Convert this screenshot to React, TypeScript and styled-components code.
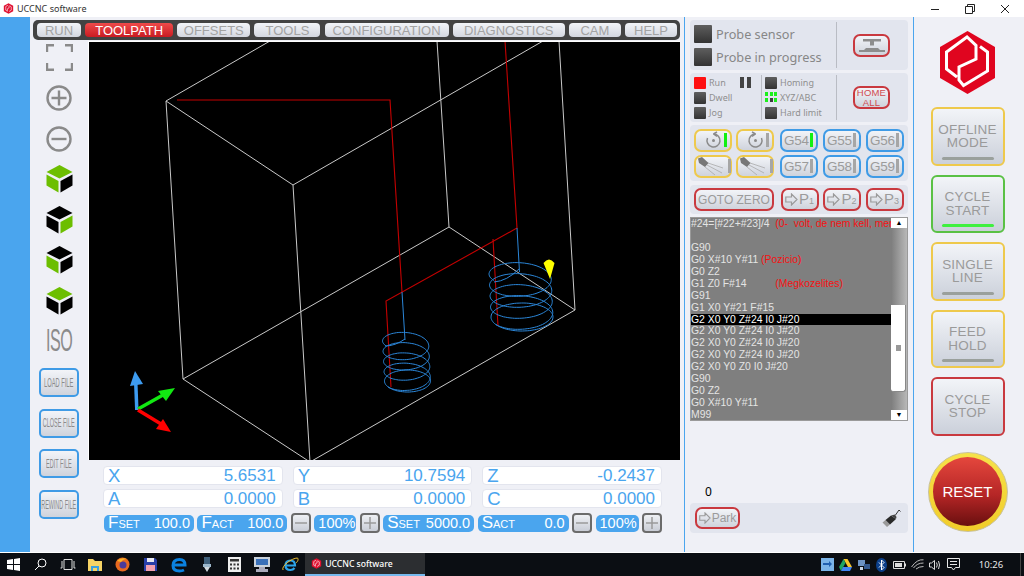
import styled, { createGlobalStyle } from "styled-components";

const BLUE = '#4aa5ee';
const TEXT_GREY = '#9b9b9b';
const BORDERS: Record<string, string> = {
	yellow: '#eec94c',
	blue: '#3f9be6',
	red: '#c9393f',
	green: '#5ac145',
};

const GlobalStyle = createGlobalStyle`
	html, body {
		margin: 0;
		padding: 0;
		background: #fff;
	}
	* {
		box-sizing: border-box;
	}
`;

const Page = styled.div`
	width: 1024px;
	height: 576px;
	overflow: hidden;
	display: flex;
	flex-direction: column;
	font-family: "Liberation Sans", Arial, sans-serif;
`;

/* window chrome */
const TitleBar = styled.div`
	height: 17px;
	flex: none;
	display: flex;
	align-items: center;
	padding: 0 3px 0 3px;
	background: #fff;
	color: #333;
	font: 9px "Noto Sans", sans-serif;
	gap: 3px;
`;

const TitleText = styled.span`
	flex: 1;
`;

const WindowButton = styled.span`
	width: 32px;
	display: flex;
	justify-content: center;
`;

const Body = styled.div`
	height: 535px;
	flex: none;
	display: flex;
	background: #eff0f6;
`;

const SideBand = styled.div`
	width: 30px;
	flex: none;
	background: ${BLUE};
`;

/* left, main area */
const MainArea = styled.main`
	width: 654px;
	flex: none;
	display: flex;
	flex-direction: column;
	padding-top: 3px;
`;

const MenuBar = styled.nav`
	height: 20px;
	margin: 0 4px 0 3px;
	padding: 0 3px 0 4px;
	display: flex;
	align-items: center;
	justify-content: space-between;
	background: #434343;
	border-radius: 5px;
`;

const MenuTab = styled.span<{ $w: number, $active?: boolean }>`
	width: ${p => p.$w}px;
	height: 14px;
	display: flex;
	align-items: center;
	justify-content: center;
	border-radius: 4px;
	font-size: 13px;
	color: ${p => p.$active ? '#fff' : '#a3a3a3'};
	background: ${p => p.$active
		? 'linear-gradient(#ef4a4a, #c91c22)'
		: 'linear-gradient(#f2f4f8, #d4d7e0)'};
`;

const Workspace = styled.div`
	display: flex;
	height: 419px;
	margin-top: 1px;
`;

const ToolColumn = styled.div`
	width: 58px;
	flex: none;
	display: flex;
	flex-direction: column;
	align-items: center;
`;

const ToolSlot = styled.div<{ $h?: number, $mb?: number }>`
	height: ${p => p.$h ?? 40.5}px;
	margin-bottom: ${p => p.$mb ?? 0}px;
	flex: none;
	display: flex;
	align-items: center;
	justify-content: center;
`;

const IsoLabel = styled.span`
	display: block;
	font-size: 31px;
	color: #8b8b8b;
	transform: scaleX(0.52);
	letter-spacing: -1px;
`;

const FileButton = styled.button`
	width: 40px;
	height: 29px;
	flex: none;
	margin-bottom: 11.7px;
	padding: 0;
	display: flex;
	align-items: center;
	justify-content: center;
	overflow: hidden;
	border: 2px solid ${BORDERS.blue};
	border-radius: 5px;
	background: linear-gradient(#f2f4f8, #cfd3dc);
	color: #8a8a8a;
	font: 12px "Liberation Sans", sans-serif;
`;

const NarrowLabel = styled.span<{ $x: number }>`
	flex: none;
	margin: 0 -30px;
	white-space: nowrap;
	transform: scaleX(${p => p.$x});
`;

const FileButtons = styled.div`
	margin-top: 6.5px;
	display: flex;
	flex-direction: column;
	align-items: center;
`;

const Viewport = styled.svg`
	display: block;
	width: 592px;
	height: 419px;
	background: #000;
	border-top: 1px solid #fff;
	border-left: 1px solid #fff;
`;

/* position readout */
const Readout = styled.section`
	width: 559px;
	margin: 6px 0 0 73px;
	display: flex;
	flex-direction: column;
`;

const AxisGrid = styled.div`
	display: grid;
	grid-template-columns: repeat(3, 1fr);
	column-gap: 10px;
	row-gap: 4px;
`;

const AxisBox = styled.div`
	height: 19px;
	display: flex;
	align-items: center;
	justify-content: space-between;
	padding: 0 6px 0 4px;
	background: #fff;
	border: 1px solid #e3e5ee;
	border-radius: 4px;
	color: ${BLUE};
	font-size: 17px;
`;

const AxisLetter = styled.span`
	font-size: 18.5px;
`;

const RateRow = styled.div`
	margin-top: 5px;
	padding-left: 1px;
	display: flex;
	align-items: center;
	justify-content: space-between;
`;

const RatePill = styled.div<{ $w: number }>`
	width: ${p => p.$w}px;
	height: 17px;
	display: flex;
	align-items: center;
	justify-content: space-between;
	padding: 0 4px;
	border-radius: 5px;
	background: ${BLUE};
	color: #fff;
	font-size: 14.5px;
`;

const RateName = styled.span`
	font-size: 17px;
	& small {
		font-size: 11px;
	}
`;

const StepButton = styled.span`
	width: 20px;
	height: 20px;
	display: flex;
	align-items: center;
	justify-content: center;
	border: 2px solid #6b6b6b;
	border-radius: 4px;
	background: linear-gradient(#eef0f4, #c9cdd6);
`;

/* middle panel */
const ControlColumn = styled.aside`
	width: 230px;
	flex: none;
	display: flex;
	flex-direction: column;
	padding: 3px 5px 19px;
	border-left: 1px solid ${BLUE};
	border-right: 1px solid ${BLUE};
`;

const Panel = styled.div<{ $h: number, $mb?: number }>`
	height: ${p => p.$h}px;
	flex: none;
	margin-bottom: ${p => p.$mb ?? 3}px;
	display: flex;
	align-items: center;
	padding: 0 4px;
	background: #e2e5ee;
	border-radius: 4px;
`;

const ProbeList = styled.div`
	width: 142px;
	display: flex;
	flex-direction: column;
	gap: 5px;
`;

const ProbeRow = styled.div`
	display: flex;
	align-items: center;
	gap: 4px;
	color: #878787;
	font: 12.7px "Noto Sans", sans-serif;
`;

const Lamp = styled.span<{ $size: number, $on?: boolean }>`
	width: ${p => p.$size}px;
	height: ${p => p.$size}px;
	flex: none;
	display: block;
	border-radius: 1px;
	background: ${p => p.$on ? '#ff1010' : 'linear-gradient(#5e5e5e, #333)'};
`;

const Rule = styled.span`
	align-self: stretch;
	width: 1px;
	margin: 2px 0;
	background: #b9bcc4;
`;

const CenterCell = styled.div`
	flex: 1;
	display: flex;
	justify-content: center;
	padding-left: 2px;
`;

const RedButton = styled.button<{ $w: number, $h?: number }>`
	width: ${p => p.$w}px;
	height: ${p => p.$h ?? 23}px;
	flex: none;
	padding: 0;
	display: flex;
	align-items: center;
	justify-content: center;
	gap: 1px;
	border: 2px solid ${BORDERS.red};
	border-radius: 7px;
	background: linear-gradient(#f2f4f8, #cfd3dc);
	color: ${TEXT_GREY};
	font: 12px "Liberation Sans", sans-serif;
`;

const HomeLabel = styled.span`
	color: #d04a50;
	font-size: 9.5px;
	line-height: 10px;
	letter-spacing: 0.2px;
	text-align: center;
`;

const PointLabel = styled.span`
	font-size: 15px;
	line-height: 15px;
	& small {
		font-size: 9px;
	}
`;

const StatusList = styled.div<{ $w: number, $pad?: number }>`
	width: ${p => p.$w}px;
	flex: none;
	padding-left: ${p => p.$pad ?? 0}px;
	display: flex;
	flex-direction: column;
	gap: 3px;
`;

const StatusRow = styled.div`
	height: 12px;
	display: flex;
	align-items: center;
	gap: 3px;
	color: #8f8f8f;
	font: 9px "Noto Sans", sans-serif;
`;

const RunName = styled.span`
	width: 28px;
`;

const PauseBars = styled.span`
	width: 11px;
	height: 11px;
	display: block;
	background: linear-gradient(90deg, #444 0 4px, transparent 4px 7px, #444 7px);
`;

const LedGrid = styled.span`
	width: 12px;
	height: 12px;
	flex: none;
	display: grid;
	grid-template-columns: repeat(3, 3px);
	grid-template-rows: repeat(2, 4px);
	column-gap: 1.5px;
	row-gap: 2px;
`;

const Led = styled.i<{ $on?: boolean }>`
	display: block;
	background: ${p => p.$on ? '#1cf01c' : '#3d3d3d'};
`;

const KeyPad = styled.div`
	display: flex;
	gap: 6px;
`;

const KeyGroup = styled.div<{ $cols: number, $gap: number }>`
	display: grid;
	grid-template-columns: repeat(${p => p.$cols}, 38px);
	grid-auto-rows: 23px;
	column-gap: ${p => p.$gap}px;
	row-gap: 3px;
`;

const KeyButton = styled.button<{ $tone: string }>`
	height: 23px;
	padding: 0 3px 0 2px;
	display: flex;
	align-items: center;
	justify-content: space-between;
	border: 2px solid ${p => BORDERS[p.$tone]};
	border-radius: 7px;
	background: linear-gradient(#f2f4f8, #cfd3dc);
	color: ${TEXT_GREY};
	font: 13.5px "Liberation Sans", sans-serif;
	letter-spacing: -0.2px;
`;

const KeyBar = styled.span<{ $on?: boolean }>`
	width: 3px;
	height: 14px;
	flex: none;
	background: ${p => p.$on ? '#12f012' : '#a6a6a6'};
`;

const PointRow = styled.div`
	display: grid;
	grid-template-columns: 82px 38px 38px 38px;
	column-gap: 4.5px;
`;

const CodeBox = styled.div`
	height: 204px;
	flex: none;
	display: flex;
	border: 1px solid #9a9a9a;
	background: #7f7f7f;
`;

const CodeLines = styled.div`
	flex: 1;
	min-width: 0;
	overflow: hidden;
`;

const CodeLine = styled.div<{ $on?: boolean }>`
	height: 11.95px;
	white-space: pre;
	line-height: 12px;
	font-size: 10.4px;
	color: ${p => p.$on ? '#fff' : '#e4e4e4'};
	background: ${p => p.$on ? '#000' : 'transparent'};
`;

const Comment = styled.span`
	color: #f51212;
`;

const ScrollBar = styled.div`
	width: 16px;
	flex: none;
	display: flex;
	flex-direction: column;
	background: linear-gradient(90deg, #7d7d7d, #b8b8b8);
`;

const ScrollEnd = styled.div`
	height: 10px;
	flex: none;
	display: flex;
	align-items: center;
	justify-content: center;
	background: #fff;
	color: #000;
	font-size: 7px;
	line-height: 10px;
`;

const ScrollThumb = styled.div`
	height: 87px;
	margin: 77px 1px 0 0;
	display: flex;
	align-items: center;
	justify-content: center;
	background: #fff;
	border-right: 1px solid #888;
	border-bottom: 1px solid #888;
	border-radius: 0 0 3px 3px;
`;

const ScrollGrip = styled.span`
	width: 5px;
	height: 6px;
	background: #999;
`;

const ScrollFill = styled.div`
	flex: 1;
`;

const Counter = styled.div`
	margin: auto 0 4px 15px;
	height: 16px;
	line-height: 16px;
	font: 12px "Noto Sans", sans-serif;
	color: #000;
`;

const ParkPanel = styled(Panel)`
	justify-content: space-between;
	padding: 0 6px 0 5px;
	margin-bottom: 0;
`;

/* right column */
const CycleColumn = styled.aside`
	flex: 1;
	display: flex;
	flex-direction: column;
	align-items: center;
	padding: 14px 3px 0 0;
`;

const Logo = styled.svg`
	display: block;
	width: 55px;
	height: 64px;
	margin-bottom: 12px;
`;

const CycleButtons = styled.div`
	display: flex;
	flex-direction: column;
	gap: 9px;
`;

const CycleButton = styled.button<{ $tone: string, $bar?: string }>`
	position: relative;
	width: 74px;
	height: 58.5px;
	padding: 0;
	border: 2px solid ${p => BORDERS[p.$tone]};
	border-radius: 6px;
	background: linear-gradient(#f2f4f8, #cbd0da);
	color: #9a9a9a;
	font: 13.5px/13.5px "Liberation Sans", sans-serif;
	letter-spacing: 0.2px;
	&::after {
		content: '';
		display: ${p => p.$bar ? 'block' : 'none'};
		position: absolute;
		left: 9px;
		right: 9px;
		bottom: 4px;
		height: 3px;
		border-radius: 2px;
		background: ${p => p.$bar};
	}
`;

const ResetRing = styled.div`
	width: 80px;
	height: 80px;
	margin-top: 16px;
	display: flex;
	align-items: center;
	justify-content: center;
	border-radius: 50%;
	border: 1px solid #c9c29a;
	background: linear-gradient(#f6e24a, #f1cc2a);
`;

const ResetButton = styled.button`
	width: 69px;
	height: 69px;
	padding: 0;
	border: none;
	border-radius: 50%;
	background: linear-gradient(#e5473d, #b52626 55%, #690f0f);
	color: #fff;
	font: 15px "Liberation Sans", sans-serif;
`;

/* windows taskbar */
const WhiteLine = styled.div`
	height: 1px;
	flex: none;
	background: #fff;
`;

const TaskBar = styled.footer`
	flex: 1;
	display: flex;
	align-items: center;
	background: #0b0e13;
	color: #fff;
`;

const TaskSlot = styled.span<{ $w: number }>`
	width: ${p => p.$w}px;
	flex: none;
	display: flex;
	align-items: center;
	justify-content: center;
`;

const TaskApp = styled.div`
	width: 120px;
	height: 100%;
	margin-left: 1px;
	display: flex;
	align-items: center;
	gap: 3px;
	padding-left: 6px;
	background: #2c2e31;
	border-bottom: 2px solid #76b9ed;
	font: 500 8.6px "Noto Sans", sans-serif;
`;

const TraySpacer = styled.div`
	flex: 1;
`;

const Clock = styled.span`
	width: 58px;
	flex: none;
	text-align: center;
	font: 9.5px "Noto Sans", sans-serif;
	color: #e8e8e8;
`;

const ShowDesktop = styled.span`
	width: 1px;
	height: 100%;
	margin-right: 3px;
	background: #444;
`;

/* drawings */
const helix = (cx: number, drift: number, yTop: number, yEnd: number, rx: number, ry: number) => {
	const points: string[] = [];
	const total = Math.PI * 2 * 5;
	const start = Math.PI * 0.82;
	for (let i = 0; i <= 400; i++) {
		const t = total * i / 400;
		const f = Math.min(t / (Math.PI * 2 * 4), 1);
		const a = start + t;
		const x = cx + drift * f + rx * Math.cos(a);
		const y = yTop + (yEnd - yTop) * f + ry * Math.sin(a);
		points.push(`${x.toFixed(1)},${y.toFixed(1)}`);
	}
	return points.join(' ');
};

const Toolpath = () => (
	<Viewport viewBox="89 43 591 418">
		<g fill="none" stroke="#c9c9c9" strokeWidth="1">
			<path d="M270 42 L166 102 L183 380 L310 463 L575 311 L559 42" />
			<path d="M166 102 L293 186 L310 463" />
			<path d="M293 186 L543 42" />
			<path d="M183 380 L449 228 L575 311" />
			<path d="M437 42 L449 228" />
		</g>
		<g fill="none" stroke="#c40000" strokeWidth="1.1">
			<path d="M177 101 L390 101 L402 293" />
			<path d="M505 42 L517 229 L386 302 L391 388" />
			<path d="M493 240 L498 327" />
		</g>
		<g fill="none" stroke="#2b86d8" strokeWidth="1">
			<path d="M402 293 L405 341" />
			<path d="M517 229 L519.500 273" />
			<path d="M405 340 Q395 347 385 347" />
			<path d="M519 270 Q507 282 494 283" />
			<polyline points={helix(520, 2, 274, 318, 31, 14)} />
			<polyline points={helix(405.5, 2, 341, 382, 23, 11)} />
		</g>
		<path d="M543.500 264 Q549 257 554.500 264 L550 280 Z" fill="#ffff00" />
		<line x1="136.800" y1="411" x2="135.800" y2="385" stroke="#3d9bf0" strokeWidth="3.500" />
		<path d="M130 387 L135 372 L143 385 Z" fill="#3d9bf0" />
		<line x1="138" y1="410" x2="163" y2="396" stroke="#12e812" strokeWidth="3.500" />
		<path d="M158 392 L175 389 L166 402 Z" fill="#12e812" />
		<line x1="138" y1="411" x2="161" y2="425" stroke="#ff0000" strokeWidth="3.500" />
		<path d="M163 420 L156 430 L171 433 Z" fill="#ff0000" />
	</Viewport>
);

const FullscreenIcon = () => (
	<svg width="27" height="27" viewBox="0 0 27 27" fill="none" stroke="#8a8a8a" strokeWidth="2.4">
		<path d="M1 8V1.200H8M19 1.200H26V8M1 19V25.800H8M19 25.800H26V19" />
	</svg>
);

const ZoomIcon = ({ plus }: { plus?: boolean }) => (
	<svg width="26" height="26" viewBox="0 0 26 26" fill="none" stroke="#8a8a8a" strokeWidth="2.4">
		<circle cx="13" cy="13" r="11.500" />
		<path d={plus ? 'M5.500 13H20.500M13 5.500V20.500' : 'M5.500 13H20.500'} />
	</svg>
);

const CubeIcon = ({ top, left, right }: { top: string, left: string, right: string }) => (
	<svg width="27" height="28" viewBox="0 0 27 28">
		<path d="M13.500 0L26.500 7L13.500 13.500L0.500 7Z" fill={top} />
		<path d="M0.500 9.500L12.500 16V27.500L0.500 20.500Z" fill={left} />
		<path d="M26.500 9.500L14.500 16V27.500L26.500 20.500Z" fill={right} />
	</svg>
);

const HexMark = ({ size }: { size: number }) => (
	<svg width={size} height={size} viewBox="0 0 20 20">
		<path d="M10 0.500L18.500 5.200V14.800L10 19.500L1.500 14.800V5.200Z" fill="#e01030" />
		<path d="M9 4L5 6.500V13L8 15M11 5V9L8 10.500V15M11 15.500L15 13V7L12 5" fill="none" stroke="#fff" strokeWidth="1.100" />
	</svg>
);

const SpindleIcon = ({ flip }: { flip?: boolean }) => (
	<svg width="19" height="19" viewBox="0 0 19 19" fill="none" stroke="#8a8a8a" strokeWidth="1.500" style={{ transform: flip ? 'scaleX(-1)' : undefined, flex: 'none', marginLeft: 6 }}>
		<path d="M9.500 3A6.500 6.500 0 1 1 3.500 7" />
		<path d="M9.500 3L13 0.800M9.500 3L13 5.400" />
		<circle cx="9.500" cy="9.500" r="1.500" fill="#8a8a8a" stroke="none" />
	</svg>
);

const CoolantIcon = () => (
	<svg width="30" height="19" viewBox="0 0 30 19" style={{ flex: 'none' }}>
		<path d="M0 1.500L4 0L10.500 6L7 10L1 6Z" fill="#777" />
		<path d="M10 6L25 11M9 8L24 16M7 10L17 18" stroke="#a9a9a9" strokeWidth="0.800" fill="none" />
	</svg>
);

const PointArrow = ({ size = 13 }: { size?: number }) => (
	<svg width={size} height={size} viewBox="0 0 13 13" fill="none" stroke="#9a9a9a" strokeWidth="1.200" style={{ flex: 'none' }}>
		<path d="M0.800 4H6.500V1L12 6.500L6.500 12V9H0.800Z" />
	</svg>
);

const ProbeIcon = () => (
	<svg width="28" height="15" viewBox="0 0 28 15">
		<path d="M5 1H23V3.500H16V7.500H12V3.500H5Z" fill="#8d8d8d" />
		<path d="M6 12L8 10H20L22 12H27V14H1V12Z" fill="#8d8d8d" />
	</svg>
);

const UsbIcon = () => (
	<svg width="20" height="20" viewBox="0 0 20 20">
		<path d="M0.500 14.500L5 19L8 16.500L3.500 12Z" fill="#9a9a9a" />
		<path d="M3.500 12L9 7.500L14 11L8 16.500Z" fill="#2a2a2a" />
		<path d="M9 7.500L13 6.500L14.500 9L14 11Z" fill="#444" />
		<path d="M13.500 7L17 2L18.500 3.500" fill="none" stroke="#333" strokeWidth="1" />
	</svg>
);

const LogoMark = () => (
	<Logo viewBox="941 31 55 64">
		<path d="M968.500 31L996 47V78L968.500 94L941 78V47Z" fill="#e0051f" />
		<path d="M958 77L947.500 69V52L968 37L977 45.500V59L960 67V80L964.500 85.500L988.500 71V52L981 46.500" fill="none" stroke="#fff" strokeWidth="3" />
	</Logo>
);

const StepGlyph = ({ plus }: { plus?: boolean }) => (
	<svg width="14" height="14" viewBox="0 0 14 14" fill="none" stroke="#9a9a9a" strokeWidth="1.500">
		<path d={plus ? 'M1 7H13M7 1V13' : 'M1 7H13'} />
	</svg>
);

const WinMin = () => (
	<svg width="10" height="10" viewBox="0 0 10 10" stroke="#222" fill="none"><path d="M1 5.500H9" /></svg>
);
const WinRestore = () => (
	<svg width="10" height="10" viewBox="0 0 10 10" stroke="#222" fill="none"><path d="M2.500 2.500V0.500H9.500V7.500H7.500M0.500 2.500H7.500V9.500H0.500Z" /></svg>
);
const WinClose = () => (
	<svg width="10" height="10" viewBox="0 0 10 10" stroke="#222" fill="none"><path d="M1 1L9 9M9 1L1 9" /></svg>
);

const taskIcons = [
	<svg key="files" width="16" height="14" viewBox="0 0 16 14"><path d="M1 1H6L8 3H15V13H1Z" fill="#f6d365" /><path d="M4 13V8H12V13H10V10H6V13Z" fill="#3aa0e0" /></svg>,
	<svg key="fox" width="15" height="15" viewBox="0 0 15 15"><circle cx="7.500" cy="7.500" r="7" fill="#e8691f" /><circle cx="8" cy="8" r="3.500" fill="#4a3a9a" /><path d="M2 4Q6 0 12 2Q8 2 6 5Z" fill="#f8b62a" /></svg>,
	<svg key="disk" width="13" height="13" viewBox="0 0 13 13"><path d="M0 0H11L13 2V13H0Z" fill="#2a3fa8" /><path d="M3 0H10V4H3Z" fill="#e8e8f0" /><path d="M2 7H11V13H2Z" fill="#f3a0b0" /></svg>,
	<svg key="edge" width="16" height="16" viewBox="0 0 16 16" fill="none" stroke="#0b82e0" strokeWidth="3"><path d="M3 8H14Q14 2.500 8.500 2.500Q2 2.500 2 8.500Q2 14 8.500 14Q11 14 13 13" /></svg>,
	<svg key="pen" width="10" height="16" viewBox="0 0 10 16"><path d="M2 0H8V7H2Z" fill="#3f5f7a" /><path d="M1 7H9V10H1Z" fill="#9db8cc" /><path d="M2 10H8L5 15Z" fill="#d0d8de" /></svg>,
	<svg key="calc" width="13" height="15" viewBox="0 0 13 15"><path d="M0 0H13V15H0Z" fill="#eee" /><path d="M2 2H11V4.500H2Z" fill="#333" /><path d="M2 6.500H4V8.500H2ZM5.500 6.500H7.500V8.500H5.500ZM9 6.500H11V8.500H9ZM2 10.500H4V12.500H2ZM5.500 10.500H7.500V12.500H5.500ZM9 10.500H11V12.500H9Z" fill="#333" /></svg>,
	<svg key="screen" width="16" height="15" viewBox="0 0 16 15"><path d="M0 0H16V10H0Z" fill="#c9d1da" /><path d="M2 2H14V8H2Z" fill="#3a70b8" /><path d="M5 10H11V12H14V15H2V12H5Z" fill="#aab" /></svg>,
	<svg key="ie" width="17" height="16" viewBox="0 0 17 16" fill="none"><path d="M4 8.500H13Q13 3.500 8.500 3.500Q3.500 3.500 3.500 8.500Q3.500 13 8.500 13Q11 13 12.500 11" stroke="#2da4e8" strokeWidth="2.200" /><path d="M1 13C-1 9 10 1 15.500 1C17 3 15 5 14 6" stroke="#f4c430" strokeWidth="1" /></svg>,
];

const trayIcons = [
	<svg key="sync" width="13" height="13" viewBox="0 0 13 13"><path d="M0 0H13V13H0Z" fill="#7bb4e8" /><path d="M2 5H8V3L11 6L8 9V7H2Z" fill="#1f5fb0" /></svg>,
	<svg key="drive" width="13" height="12" viewBox="0 0 13 12"><path d="M4.500 0H8.500L13 8H9Z" fill="#f7c52c" /><path d="M4.500 0L0 8L2 12L6.500 4Z" fill="#1fa463" /><path d="M2 12H11L13 8H4Z" fill="#4285f4" /></svg>,
	<svg key="net" width="13" height="12" viewBox="0 0 13 12"><path d="M1 1H8V7H1Z" fill="#6d93c4" /><path d="M7 5H13V10H7Z" fill="#35598e" /><path d="M3 8H6V11H3Z" fill="#c9d5e6" /></svg>,
	<svg key="bt" width="11" height="14" viewBox="0 0 11 14"><ellipse cx="5.500" cy="7" rx="5.500" ry="7" fill="#0b3f8a" /><path d="M3 4.500L8 9.500L5.500 12V2L8 4.500L3 9.500" stroke="#fff" fill="none" /></svg>,
	<svg key="batt" width="13" height="8" viewBox="0 0 13 8"><path d="M0.500 0.500H11.500V7.500H0.500Z" fill="none" stroke="#ddd" /><path d="M2 2H9V6H2Z" fill="#ddd" /><path d="M12 2.500H13V5.500H12Z" fill="#ddd" /></svg>,
	<svg key="wifi" width="13" height="11" viewBox="0 0 13 11" fill="none" stroke="#bbb"><path d="M0.500 8Q6 0 12.500 0.800M2.500 9Q6 4 12.500 4M5 10Q8 7.500 12.500 7.500" /></svg>,
	<svg key="vol" width="13" height="12" viewBox="0 0 13 12" fill="none" stroke="#ddd"><path d="M0.500 4H2.500L5.500 1.500V10.500L2.500 8H0.500Z" /><path d="M7.500 3.500Q9 6 7.500 8.500M9.500 2Q11.500 6 9.500 10" /></svg>,
	<svg key="note" width="13" height="13" viewBox="0 0 13 13" fill="none" stroke="#e8e8e8"><path d="M0.500 0.500H12.500V9.500H8.500L6.500 12L4.500 9.500H0.500Z" /><path d="M3 3.500H10M3 6.500H10" /></svg>,
];

const CODE: Array<[string, string?]> = [
	['#24=[#22+#23]/4  ', '(0-  volt, de nem kell, mer'],
	[''],
	['G90'],
	['G0 X#10 Y#11 ', '(Pozicio)'],
	['G0 Z2'],
	['G1 Z0 F#14          ', '(Megkozelites)'],
	['G91'],
	['G1 X0 Y#21 F#15'],
	['G2 X0 Y0 Z#24 I0 J#20'],
	['G2 X0 Y0 Z#24 I0 J#20'],
	['G2 X0 Y0 Z#24 I0 J#20'],
	['G2 X0 Y0 Z#24 I0 J#20'],
	['G2 X0 Y0 Z0 I0 J#20'],
	['G90'],
	['G0 Z2'],
	['G0 X#10 Y#11'],
	['M99'],
];

const AXES = [
	['X', '5.6531'], ['Y', '10.7594'], ['Z', '-0.2437'],
	['A', '0.0000'], ['B', '0.0000'], ['C', '0.0000'],
];

const MENU: Array<[string, number]> = [
	['RUN', 44], ['TOOLPATH', 88], ['OFFSETS', 73], ['TOOLS', 66],
	['CONFIGURATION', 124], ['DIAGNOSTICS', 112], ['CAM', 52], ['HELP', 52],
];

const GREEN = '#6cbe00';
const BLACK = '#000';

export default function App() {
	return (
		<Page>
			<GlobalStyle />
			<TitleBar>
				<HexMark size={11} />
				<TitleText>UCCNC software</TitleText>
				<WindowButton><WinMin /></WindowButton>
				<WindowButton><WinRestore /></WindowButton>
				<WindowButton><WinClose /></WindowButton>
			</TitleBar>
			<Body>
				<SideBand />
				<MainArea>
					<MenuBar>
						{MENU.map(([label, w]) => (
							<MenuTab key={label} $w={w} $active={label === 'TOOLPATH'}>{label}</MenuTab>
						))}
					</MenuBar>
					<Workspace>
						<ToolColumn>
							<ToolSlot $h={33} $mb={4}><FullscreenIcon /></ToolSlot>
							<ToolSlot><ZoomIcon plus /></ToolSlot>
							<ToolSlot><ZoomIcon /></ToolSlot>
							<ToolSlot><CubeIcon top={GREEN} left={GREEN} right={BLACK} /></ToolSlot>
							<ToolSlot><CubeIcon top={BLACK} left={BLACK} right={GREEN} /></ToolSlot>
							<ToolSlot><CubeIcon top={BLACK} left={GREEN} right={BLACK} /></ToolSlot>
							<ToolSlot><CubeIcon top={GREEN} left={BLACK} right={BLACK} /></ToolSlot>
							<ToolSlot><IsoLabel>ISO</IsoLabel></ToolSlot>
							<FileButtons>
								<FileButton><NarrowLabel $x={0.48}>LOAD FILE</NarrowLabel></FileButton>
								<FileButton><NarrowLabel $x={0.46}>CLOSE FILE</NarrowLabel></FileButton>
								<FileButton><NarrowLabel $x={0.46}>EDIT FILE</NarrowLabel></FileButton>
								<FileButton><NarrowLabel $x={0.45}>REWIND FILE</NarrowLabel></FileButton>
							</FileButtons>
						</ToolColumn>
						<Toolpath />
					</Workspace>
					<Readout>
						<AxisGrid>
							{AXES.map(([name, value]) => (
								<AxisBox key={name}>
									<AxisLetter>{name}</AxisLetter>
									{value}
								</AxisBox>
							))}
						</AxisGrid>
						<RateRow>
							<RatePill $w={90}><RateName>F<small>SET</small></RateName>100.0</RatePill>
							<RatePill $w={90}><RateName>F<small>ACT</small></RateName>100.0</RatePill>
							<StepButton><StepGlyph /></StepButton>
							<RatePill $w={42}>100%</RatePill>
							<StepButton><StepGlyph plus /></StepButton>
							<RatePill $w={91}><RateName>S<small>SET</small></RateName>5000.0</RatePill>
							<RatePill $w={91}><RateName>S<small>ACT</small></RateName>0.0</RatePill>
							<StepButton><StepGlyph /></StepButton>
							<RatePill $w={43}>100%</RatePill>
							<StepButton><StepGlyph plus /></StepButton>
						</RateRow>
					</Readout>
				</MainArea>
				<ControlColumn>
					<Panel $h={50}>
						<ProbeList>
							<ProbeRow><Lamp $size={18} />Probe sensor</ProbeRow>
							<ProbeRow><Lamp $size={18} />Probe in progress</ProbeRow>
						</ProbeList>
						<Rule />
						<CenterCell>
							<RedButton $w={37}><ProbeIcon /></RedButton>
						</CenterCell>
					</Panel>
					<Panel $h={49}>
						<StatusList $w={67}>
							<StatusRow><Lamp $size={12} $on /><RunName>Run</RunName><PauseBars /></StatusRow>
							<StatusRow><Lamp $size={12} />Dwell</StatusRow>
							<StatusRow><Lamp $size={12} />Jog</StatusRow>
						</StatusList>
						<Rule />
						<StatusList $w={74} $pad={3}>
							<StatusRow><Lamp $size={12} />Homing</StatusRow>
							<StatusRow>
								<LedGrid>
									<Led $on /><Led $on /><Led $on />
									<Led $on /><Led /><Led $on />
								</LedGrid>
								XYZ/ABC
							</StatusRow>
							<StatusRow><Lamp $size={12} />Hard limit</StatusRow>
						</StatusList>
						<Rule />
						<CenterCell>
							<RedButton $w={37}><HomeLabel>HOME<br />ALL</HomeLabel></RedButton>
						</CenterCell>
					</Panel>
					<Panel $h={56} $mb={4}>
						<KeyPad>
							<KeyGroup $cols={2} $gap={4}>
								<KeyButton $tone="yellow"><SpindleIcon /><KeyBar $on /></KeyButton>
								<KeyButton $tone="yellow"><SpindleIcon flip /><KeyBar /></KeyButton>
								<KeyButton $tone="yellow"><CoolantIcon /><KeyBar /></KeyButton>
								<KeyButton $tone="yellow"><CoolantIcon /><KeyBar /></KeyButton>
							</KeyGroup>
							<KeyGroup $cols={3} $gap={5}>
								<KeyButton $tone="blue">G54<KeyBar $on /></KeyButton>
								<KeyButton $tone="blue">G55<KeyBar /></KeyButton>
								<KeyButton $tone="blue">G56<KeyBar /></KeyButton>
								<KeyButton $tone="blue">G57<KeyBar /></KeyButton>
								<KeyButton $tone="blue">G58<KeyBar /></KeyButton>
								<KeyButton $tone="blue">G59<KeyBar /></KeyButton>
							</KeyGroup>
						</KeyPad>
					</Panel>
					<Panel $h={29}>
						<PointRow>
							<RedButton $w={80}>GOTO ZERO</RedButton>
							<RedButton $w={38}><PointArrow /><PointLabel>P<small>1</small></PointLabel></RedButton>
							<RedButton $w={38}><PointArrow /><PointLabel>P<small>2</small></PointLabel></RedButton>
							<RedButton $w={38}><PointArrow /><PointLabel>P<small>3</small></PointLabel></RedButton>
						</PointRow>
					</Panel>
					<CodeBox>
						<CodeLines>
							{CODE.map(([code, note], i) => (
								<CodeLine key={i} $on={i === 8}>{code}{note && <Comment>{note}</Comment>}</CodeLine>
							))}
						</CodeLines>
						<ScrollBar>
							<ScrollEnd>▲</ScrollEnd>
							<ScrollThumb><ScrollGrip /></ScrollThumb>
							<ScrollFill />
							<ScrollEnd>▼</ScrollEnd>
						</ScrollBar>
					</CodeBox>
					<Counter>0</Counter>
					<ParkPanel $h={30}>
						<RedButton $w={45} $h={22}><PointArrow size={12} />Park</RedButton>
						<UsbIcon />
					</ParkPanel>
				</ControlColumn>
				<CycleColumn>
					<LogoMark />
					<CycleButtons>
						<CycleButton $tone="yellow" $bar="#9aa09c">OFFLINE<br />MODE</CycleButton>
						<CycleButton $tone="green" $bar="#3ff03f">CYCLE<br />START</CycleButton>
						<CycleButton $tone="yellow" $bar="#9aa09c">SINGLE<br />LINE</CycleButton>
						<CycleButton $tone="yellow" $bar="#9aa09c">FEED<br />HOLD</CycleButton>
						<CycleButton $tone="red">CYCLE<br />STOP</CycleButton>
					</CycleButtons>
					<ResetRing>
						<ResetButton>RESET</ResetButton>
					</ResetRing>
				</CycleColumn>
			</Body>
			<WhiteLine />
			<TaskBar>
				<TaskSlot $w={27}>
					<svg width="13" height="13" viewBox="0 0 13 13" fill="#fff"><path d="M0 2L6 1V6H0ZM7 1L13 0V6H7ZM0 7H6V12L0 11ZM7 7H13V13L7 12Z" /></svg>
				</TaskSlot>
				<TaskSlot $w={27}>
					<svg width="13" height="13" viewBox="0 0 13 13" fill="none" stroke="#fff"><circle cx="8" cy="5" r="4" /><path d="M5 8L1 12" /></svg>
				</TaskSlot>
				<TaskSlot $w={27}>
					<svg width="16" height="11" viewBox="0 0 16 11" fill="none" stroke="#ddd"><path d="M4 0.500H12V10.500H4ZM2 2V9H0.500M14 2V9H15.500" /></svg>
				</TaskSlot>
				{taskIcons.map(icon => <TaskSlot key={icon.key} $w={27.9}>{icon}</TaskSlot>)}
				<TaskApp><HexMark size={11} />UCCNC software</TaskApp>
				<TraySpacer />
				{trayIcons.map(icon => <TaskSlot key={icon.key} $w={18}>{icon}</TaskSlot>)}
				<Clock>10:26</Clock>
				<ShowDesktop />
			</TaskBar>
		</Page>
	);
}
